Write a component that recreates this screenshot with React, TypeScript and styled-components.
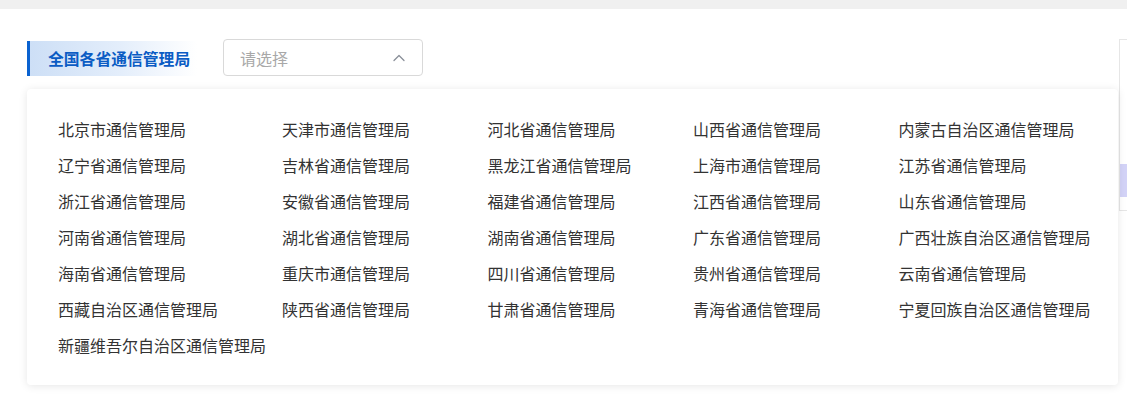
import React from 'react';
import styled, { createGlobalStyle } from 'styled-components';

const GlobalStyle = createGlobalStyle`
  html, body {
    margin: 0;
    padding: 0;
    background: #fff;
    font-family: "Noto Sans CJK SC", "Noto Sans", sans-serif;
  }
`;

const Page = styled.div`
  width: 1127px;
  height: 394px;
  overflow: hidden;
  background: #fff;
`;

const TopBar = styled.div`
  height: 9px;
  background: #f0f0f0;
`;

const Main = styled.div`
  display: flex;
  padding-top: 30px;
`;

const FilterArea = styled.div`
  flex: 1;
  position: relative;
  padding-left: 27px;
`;

const FilterRow = styled.div`
  display: flex;
  align-items: center;
  gap: 26px;
`;

const Label = styled.div`
  width: 170px;
  height: 35px;
  margin-top: 1px;
  box-sizing: border-box;
  display: flex;
  align-items: center;
  padding-left: 18px;
  border-left: 3px solid #0a62d0;
  background: linear-gradient(90deg, #cddff6 0%, #e4eefb 55%, #ffffff 100%);
  color: #0b5cc4;
  font-size: 15.8px;
  font-weight: 700;
`;

const Select = styled.div`
  width: 200px;
  height: 37px;
  box-sizing: border-box;
  border: 1px solid #d9d9d9;
  border-radius: 4px;
  display: flex;
  align-items: center;
  justify-content: space-between;
  padding: 0 17px 0 16px;
  color: #a8a8a8;
  font-size: 16px;
`;

const Dropdown = styled.div`
  position: absolute;
  top: 50px;
  left: 27px;
  right: 1px;
  box-sizing: border-box;
  padding: 22px 0 22px 31px;
  background: #fff;
  border-radius: 4px;
  box-shadow: 0 1px 8px rgba(0, 0, 0, 0.1);
  display: grid;
  grid-template-columns: 208px repeat(4, 189.5px);
  column-gap: 16px;
  z-index: 2;
`;

const Option = styled.div`
  height: 36px;
  line-height: 36px;
  font-size: 16px;
  color: #333;
  white-space: nowrap;
  cursor: pointer;
  &:hover {
    color: #0a5bc6;
  }
`;

const SidePanel = styled.div`
  width: 7px;
  height: 170px;
  border: 1px solid #e6e6e6;
  border-right: none;
  display: flex;
  flex-direction: column;
`;

const SideHead = styled.div`
  height: 124px;
`;

const SideRow = styled.div<{ tone: string }>`
  height: 33px;
  background: ${p => p.tone};
`;

const bureaus = [
  '北京市', '天津市', '河北省', '山西省', '内蒙古自治区',
  '辽宁省', '吉林省', '黑龙江省', '上海市', '江苏省',
  '浙江省', '安徽省', '福建省', '江西省', '山东省',
  '河南省', '湖北省', '湖南省', '广东省', '广西壮族自治区',
  '海南省', '重庆市', '四川省', '贵州省', '云南省',
  '西藏自治区', '陕西省', '甘肃省', '青海省', '宁夏回族自治区',
  '新疆维吾尔自治区'
];

function ChevronUp() {
  return (
    <svg width="12" height="8" viewBox="0 0 12 8" fill="none">
      <path d="M1 6.5 L6 1.5 L11 6.5" stroke="#8a8f99" strokeWidth="1.3" strokeLinecap="round" strokeLinejoin="round" />
    </svg>
  );
}

export default function App() {
  return (
    <Page>
      <GlobalStyle />
      <TopBar />
      <Main>
        <FilterArea>
          <FilterRow>
            <Label>全国各省通信管理局</Label>
            <Select>
              <span>请选择</span>
              <ChevronUp />
            </Select>
          </FilterRow>
          <Dropdown>
            {bureaus.map(name => (
              <Option key={name}>{name}通信管理局</Option>
            ))}
          </Dropdown>
        </FilterArea>
        <SidePanel>
          <SideHead />
          <SideRow tone="#d3d3f7" />
        </SidePanel>
      </Main>
    </Page>
  );
}
